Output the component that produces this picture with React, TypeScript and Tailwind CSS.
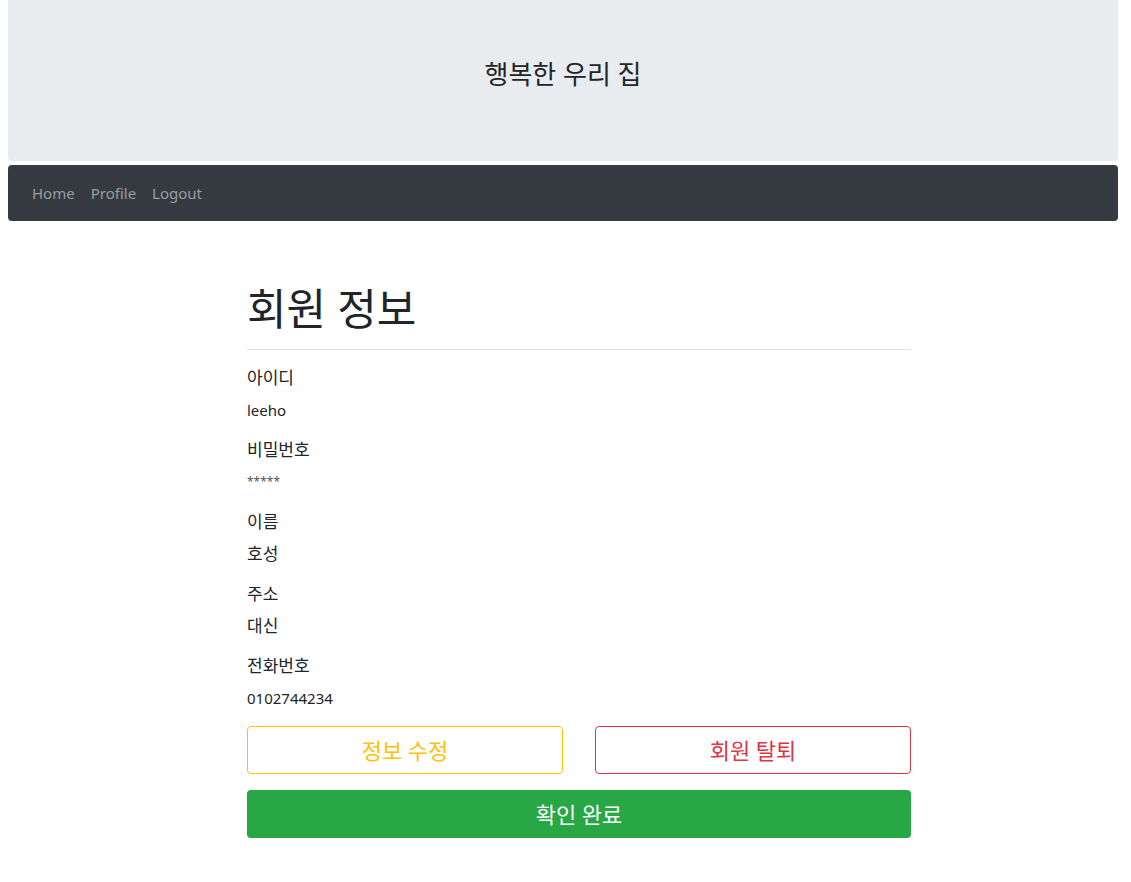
import React from "react";

const font = {
  fontFamily: '"Noto Sans", "Noto Sans CJK KR", sans-serif',
};

type Field = { label: string; value: string; valueClass?: string };

const fields: Field[] = [
  { label: "아이디", value: "leeho", valueClass: "text-[15px]" },
  { label: "비밀번호", value: "*****", valueClass: "text-[12px] text-[#555]" },
  { label: "이름", value: "호성", valueClass: "text-[17px]" },
  { label: "주소", value: "대신", valueClass: "text-[17px]" },
  { label: "전화번호", value: "0102744234", valueClass: "text-[15px]" },
];

const NavLink = ({ children }: { children: React.ReactNode }) => (
  <a href="#" className="px-2 py-2 text-[15px] leading-6 text-[#9a9da0] no-underline">
    {children}
  </a>
);

export default function App() {
  return (
    <div className="min-h-screen bg-white text-[#212529]" style={font}>
      {/* header */}
      <div className="ml-2 w-[1110px] h-[161px] bg-[#e9ecef] rounded-b-[4px] pt-[59px] text-center">
        <h2 className="text-[26px] leading-[31px] font-normal text-[#212529]">
          행복한 우리 집
        </h2>
      </div>

      {/* navbar */}
      <nav className="ml-2 mt-1 w-[1110px] h-[56px] bg-[#343a40] rounded-[4px] flex items-center px-4">
        <NavLink>Home</NavLink>
        <NavLink>Profile</NavLink>
        <NavLink>Logout</NavLink>
      </nav>

      {/* content */}
      <div className="ml-[247px] w-[664px] pt-[64px] pb-10">
        <h1 className="text-[43px] leading-[48px] font-normal">회원 정보</h1>
        <hr className="my-4 border-0 border-t border-[#e0e0e0]" />

        {fields.map((f) => (
          <div key={f.label} className="mb-4">
            <div className="text-[17px] leading-6 mb-2">{f.label}</div>
            <div className={`leading-6 ${f.valueClass}`}>{f.value}</div>
          </div>
        ))}

        <div className="flex gap-8">
          <button className="flex-1 h-12 border border-[#ffc107] rounded-[4px] text-[22px] text-[#ffc107] bg-white">
            정보 수정
          </button>
          <button className="flex-1 h-12 border border-[#dc3545] rounded-[4px] text-[22px] text-[#dc3545] bg-white">
            회원 탈퇴
          </button>
        </div>
        <button className="mt-4 w-full h-12 rounded-[4px] bg-[#28a745] text-white text-[22px]">
          확인 완료
        </button>
      </div>
    </div>
  );
}
